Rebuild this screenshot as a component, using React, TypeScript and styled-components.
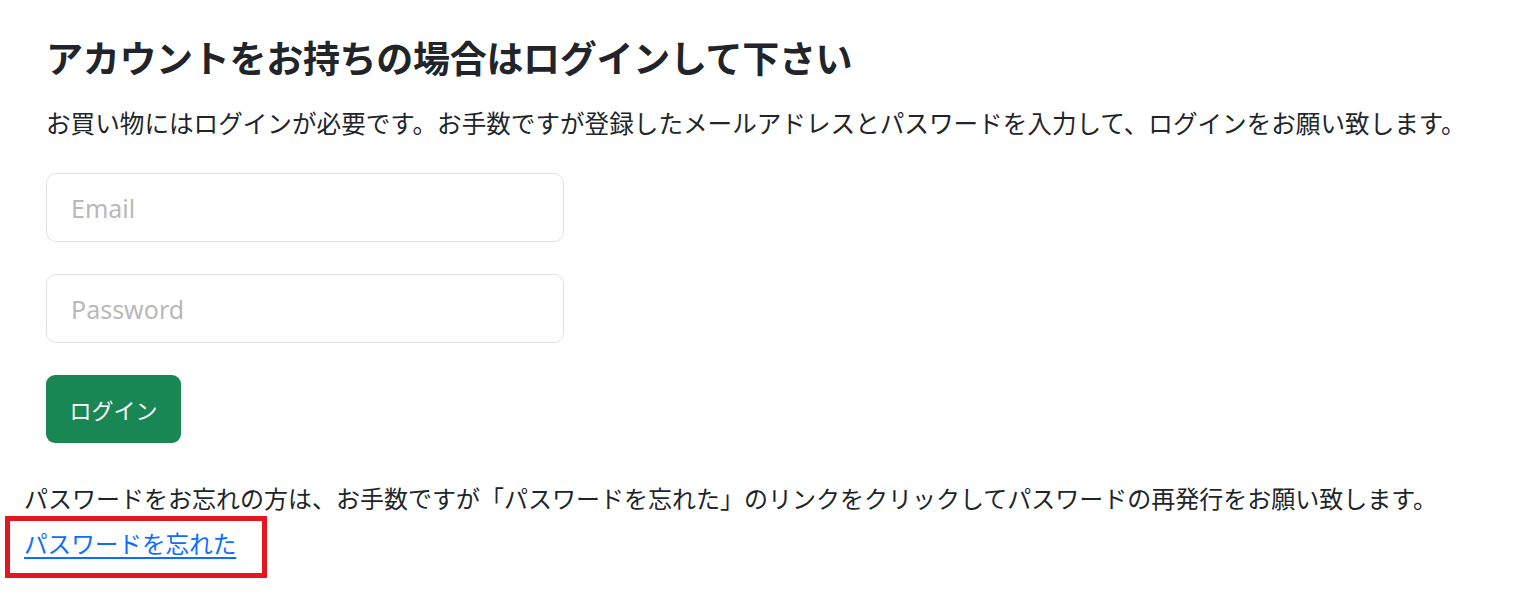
import styled, { createGlobalStyle } from "styled-components";

const GlobalStyle = createGlobalStyle`
  body {
    margin: 0;
    background: #ffffff;
    color: #212529;
    font-family: "Noto Sans CJK JP", "Noto Sans", sans-serif;
  }
`;

const Page = styled.div`
  padding: 35px 0 0 24px;
`;

const LoginSection = styled.section`
  margin-left: 22px;
`;

const Title = styled.h1`
  margin: 0;
  font-size: 37px;
  line-height: 44px;
  font-weight: 700;
  letter-spacing: -0.3px;
`;

const Lead = styled.p`
  margin: 27px 0 0;
  font-size: 24.6px;
  line-height: 32px;
`;

const Form = styled.form`
  display: flex;
  flex-direction: column;
  align-items: flex-start;
  gap: 32px;
  margin-top: 35px;
`;

const Input = styled.input`
  box-sizing: border-box;
  width: 518px;
  height: 69px;
  padding: 0 24px;
  border: 1.5px solid #dee2e6;
  border-radius: 10px;
  font-family: "Noto Sans", sans-serif;
  font-size: 25px;
  color: #212529;
  outline: none;

  &::placeholder {
    color: #b9b9b9;
  }
`;

const SubmitButton = styled.button`
  box-sizing: border-box;
  width: 135px;
  height: 68px;
  border: none;
  border-radius: 9px;
  background: #198754;
  color: #ffffff;
  font-family: "Noto Sans CJK JP", sans-serif;
  font-size: 22px;
  font-weight: 400;
  cursor: pointer;
`;

const Note = styled.p`
  margin: 39px 0 0;
  font-size: 24px;
  line-height: 32px;
`;

const Highlight = styled.div`
  display: inline-block;
  margin: 2px 0 0 -19px;
  padding: 6px 26px 14px 14px;
  border: 5px solid #e3171f;
`;

const ForgotLink = styled.a`
  display: block;
  font-size: 23.6px;
  line-height: 32px;
  color: #0d6efd;
  text-decoration: underline;
  text-underline-offset: 4px;
`;

export default function App() {
  return (
    <>
      <GlobalStyle />
      <Page>
        <LoginSection>
          <Title>アカウントをお持ちの場合はログインして下さい</Title>
          <Lead>
            お買い物にはログインが必要です。お手数ですが登録したメールアドレスとパスワードを入力して、ログインをお願い致します。
          </Lead>
          <Form onSubmit={(e) => e.preventDefault()}>
            <Input type="email" placeholder="Email" />
            <Input type="password" placeholder="Password" />
            <SubmitButton type="submit">ログイン</SubmitButton>
          </Form>
        </LoginSection>
        <Note>
          パスワードをお忘れの方は、お手数ですが「パスワードを忘れた」のリンクをクリックしてパスワードの再発行をお願い致します。
        </Note>
        <Highlight>
          <ForgotLink href="#">パスワードを忘れた</ForgotLink>
        </Highlight>
      </Page>
    </>
  );
}
